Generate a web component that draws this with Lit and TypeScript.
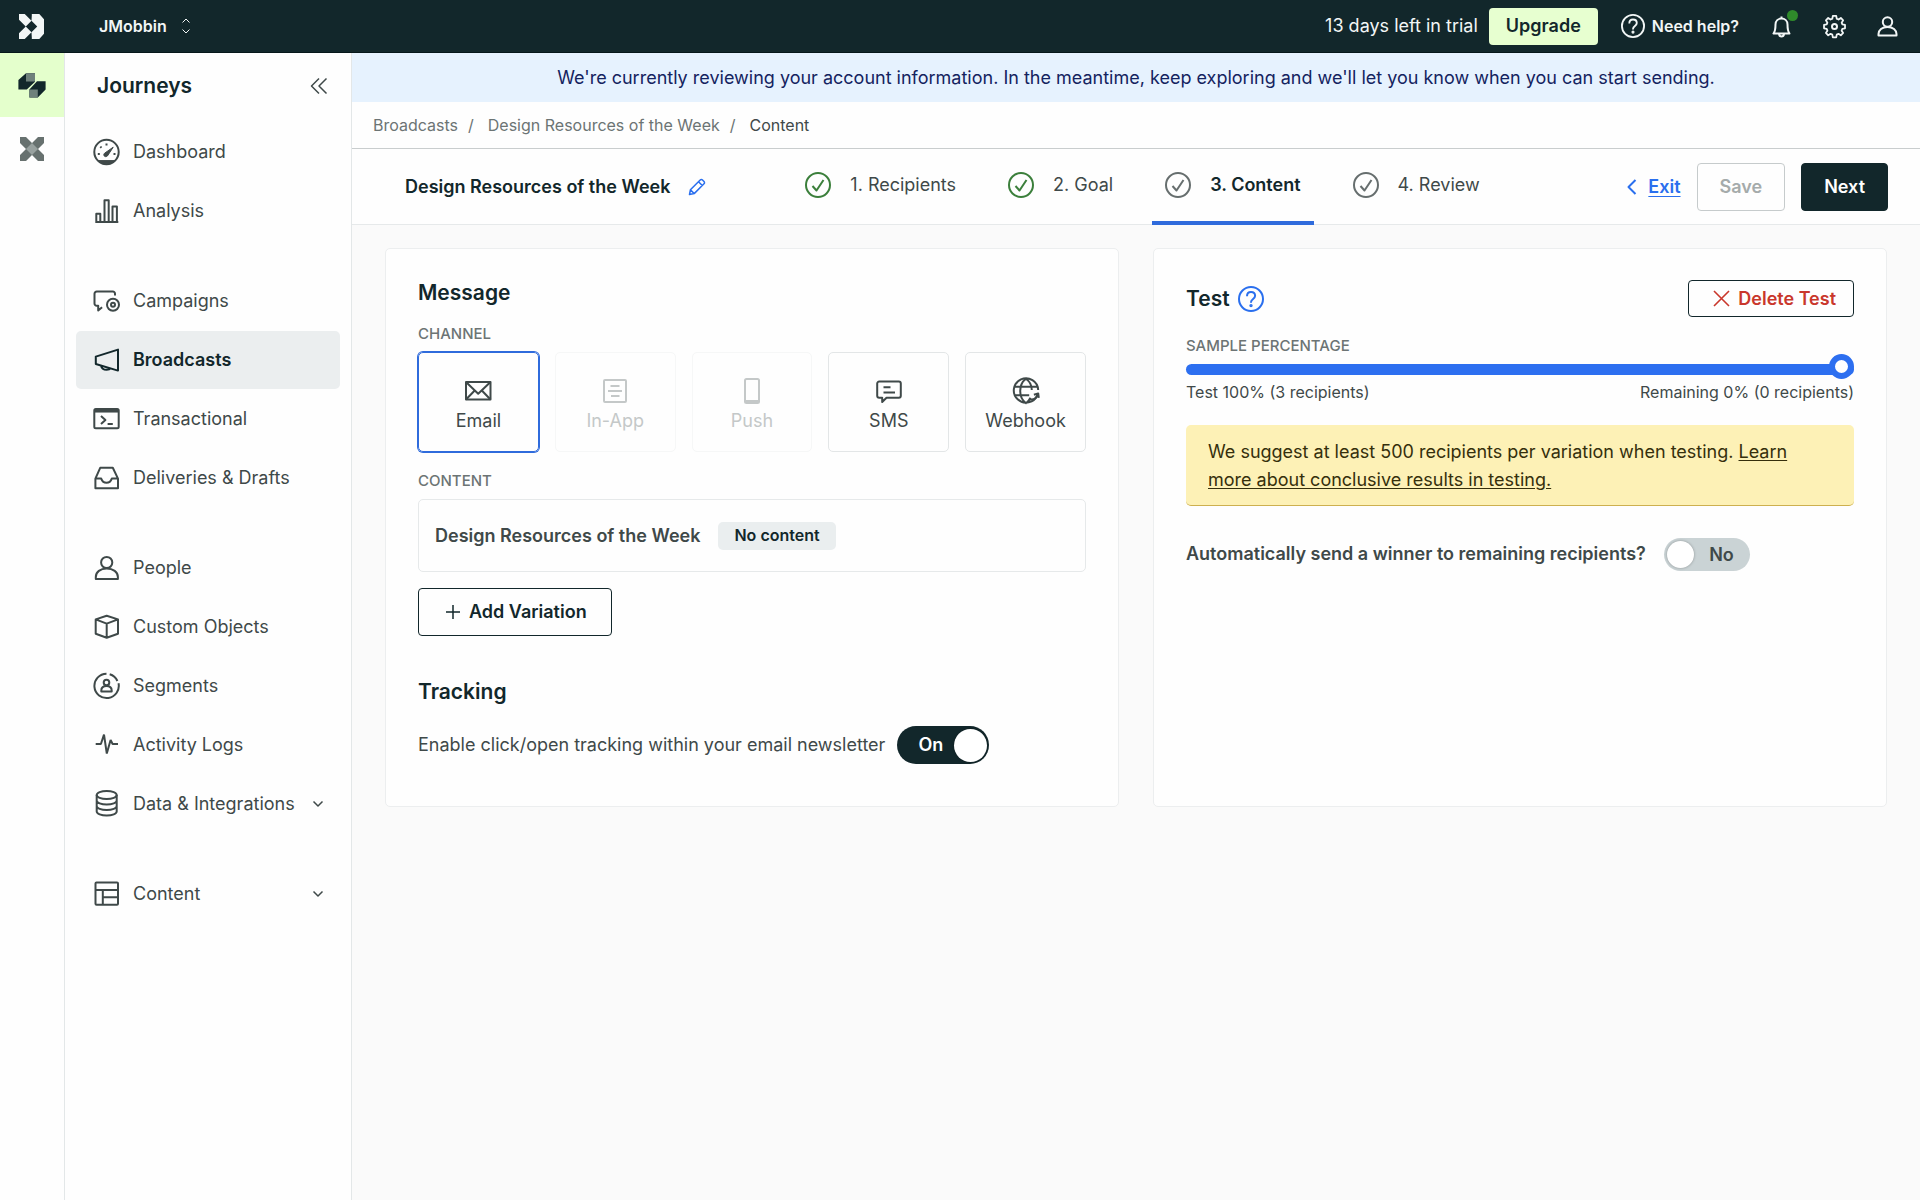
import { LitElement, html, svg, css, nothing, type TemplateResult } from "lit";
import { customElement, property, state } from "lit/decorators.js";
import { classMap } from "lit/directives/class-map.js";

/* Line icons for the navigation and the channel tiles, drawn on a 28px grid. */
const ICONS: Record<string, TemplateResult> = {
  dashboard: svg`<circle cx="14.5" cy="14" r="12.2"/><path d="M6 22.6h17l-4 3.2h-9z" fill="currentColor" stroke-width="1"/><path d="M14.5 5.500v2M8.300 8.600l1.200 1.200M5.800 16h2M21.500 16h2"/><path d="M12.600 15.200l8.600-6-5.800 8.800c-2.600 2-4.800-1-2.800-2.800z" fill="currentColor" stroke-width="1"/>`,
  analysis: svg`<path d="M3.300 25h23M4.300 25v-8.200h4V25M12.500 25V3.300h4.200V25M20.500 25V9.600h4.400V25"/>`,
  campaigns: svg`<path d="M23 8.400V6.800a2.200 2.200 0 0 0-2.200-2.200H4.700a2.200 2.200 0 0 0-2.200 2.200v9.800a2.200 2.200 0 0 0 2.200 2.200h1.500v4.600l3.900-3.200"/><circle cx="21" cy="17.700" r="6"/><circle cx="21" cy="17.700" r="2"/>`,
  broadcasts: svg`<path d="M3.800 10.600L26 3.600v21L3.800 18zM9 19.600c.6 3 3 4.200 5.600 4.200 2 0 3.400-.6 4-1.600"/>`,
  transactional: svg`<rect x="2.300" y="3.900" width="24.400" height="19.300" rx="1.500"/><path d="M2.300 5.800h24.400" stroke-width="3.500"/><path d="M9 11l4.400 4L9 19M15.600 19h5.200"/>`,
  deliveries: svg`<path d="M8.200 3.800h12.600L26 14.600v9.700H3.400v-9.700zM3.400 14.600h5.800c1 2.800 2.800 4.200 5.300 4.200s4.300-1.400 5.300-4.200H26"/>`,
  people: svg`<circle cx="14.700" cy="8.500" r="5.600"/><path d="M3.800 25v-2c0-5 4.500-8.500 10.900-8.500S25.900 18 25.900 23v2z"/>`,
  objects: svg`<path d="M14.700 2.800L26 6.400v14.300l-11.300 4L3.700 20.700V6.400zM3.700 6.400l11 4.200L26 6.400M14.700 10.600v14.100"/>`,
  segments: svg`<path d="M14.500 1.700a12.200 12.200 0 1 0 12 9.500M25.400 9a12 12 0 0 0-7.700-6.800"/><circle cx="14.500" cy="10.500" r="2.800"/><path d="M9.300 19.500v-1c0-2.800 2-4.500 5.200-4.500s5.200 1.700 5.200 4.500v1z"/>`,
  activity: svg`<path d="M3.700 13h5.200L12 3.600l2.800 19L18.600 9l2 4H26" stroke-linejoin="bevel"/>`,
  data: svg`<ellipse cx="14.700" cy="5" rx="10" ry="4"/><path d="M4.700 5v16.500c0 2.200 4.500 4 10 4s10-1.800 10-4V5M4.700 10.500c0 2.200 4.500 4 10 4s10-1.800 10-4M4.700 16c0 2.200 4.500 4 10 4s10-1.800 10-4"/>`,
  content: svg`<rect x="3.500" y="2.500" width="22.500" height="22.200" rx="1"/><path d="M3.500 10H26M10.800 10v14.700M10.800 17.200H26"/>`,
  email: svg`<rect x="2" y="5" width="24.500" height="17.500"/><path d="M2 5l12.200 11.700L26.500 5M2 22.500l8.700-9M26.500 22.500l-8.700-9"/>`,
  inapp: svg`<rect x="3" y="3" width="22" height="22" rx="1"/><path d="M9.500 9h9M7 14h14M10 19h8.500" stroke-width="2"/>`,
  push: svg`<rect x="7" y="2" width="14" height="24" rx="1.500"/><path d="M7 24.500h14" stroke-width="3"/>`,
  sms: svg`<path d="M4.200 4.500h19.600a2 2 0 0 1 2 2v12.200a2 2 0 0 1-2 2H11.500L7.200 25v-4.300h-3a2 2 0 0 1-2-2V6.500a2 2 0 0 1 2-2zM8.500 10.200h7M8.500 15.400h11.500"/>`,
  webhook: svg`<path d="M25.400 17.800A12.200 12.200 0 1 1 26.200 13M14 1.800C10.300 4.500 8.200 9 8.200 14s2.100 9.500 5.800 12.200c2-1.400 3.500-3.300 4.500-5.400M14 1.800c3.700 2.700 5.800 7 5.800 11.200M2.600 9.800h22.800M2.600 18.200h14.600"/><path d="M18 22.500c3.500.5 6.500-1 8-4.800M26.800 20.800l-.6-4.400-4.300 1.400"/>`,
};

const glyph = (name: string) =>
  html`<svg class="glyph" viewBox="0 0 28 28" aria-hidden="true">${ICONS[name]}</svg>`;

const helpGlyph = html`<svg class="help-glyph" viewBox="0 0 26 26" aria-hidden="true">
  <circle cx="13" cy="13" r="12" />
  <path d="M9 10.200C9 7.600 10.700 6 13 6s4.100 1.500 4.100 3.800c0 3.200-4.100 3.200-4.100 6.500v.4" />
  <circle cx="13" cy="19.600" r=".7" fill="currentColor" />
</svg>`;

interface NavItem {
  icon: string;
  label: string;
  expandable?: boolean;
}

const NAV: NavItem[][] = [
  [
    { icon: "dashboard", label: "Dashboard" },
    { icon: "analysis", label: "Analysis" },
  ],
  [
    { icon: "campaigns", label: "Campaigns" },
    { icon: "broadcasts", label: "Broadcasts" },
    { icon: "transactional", label: "Transactional" },
    { icon: "deliveries", label: "Deliveries & Drafts" },
  ],
  [
    { icon: "people", label: "People" },
    { icon: "objects", label: "Custom Objects" },
    { icon: "segments", label: "Segments" },
    { icon: "activity", label: "Activity Logs" },
    { icon: "data", label: "Data & Integrations", expandable: true },
  ],
  [{ icon: "content", label: "Content", expandable: true }],
];

const STEPS = [
  { label: "1. Recipients", done: true },
  { label: "2. Goal", done: true },
  { label: "3. Content", done: false },
  { label: "4. Review", done: false },
];

const CHANNELS = [
  { icon: "email", label: "Email" },
  { icon: "inapp", label: "In-App", disabled: true },
  { icon: "push", label: "Push", disabled: true },
  { icon: "sms", label: "SMS" },
  { icon: "webhook", label: "Webhook" },
];

const shared = css`
  *,
  *::before,
  *::after {
    box-sizing: border-box;
  }
  :host {
    display: block;
    font-family: Inter, "Liberation Sans", sans-serif;
    font-size: 18px;
    line-height: 28px;
    color: #3f4949;
  }
  h1,
  h2,
  h3,
  p,
  ul,
  ol {
    margin: 0;
    padding: 0;
    list-style: none;
  }
  button {
    font: inherit;
    color: inherit;
    background: none;
    border: 0;
    padding: 0;
    cursor: pointer;
  }
  a {
    color: inherit;
    text-decoration: none;
  }
  svg {
    display: block;
    flex: none;
    fill: none;
    stroke: currentColor;
    stroke-width: 2;
    stroke-linecap: butt;
    stroke-linejoin: round;
  }
  .strong {
    font-size: 18px;
    font-weight: 600;
  }
  .glyph {
    width: 28px;
    height: 28px;
  }
  .help-glyph {
    width: 26px;
    height: 26px;
  }
`;

@customElement("top-bar")
class TopBar extends LitElement {
  static styles = [
    shared,
    css`
      .bar {
        display: flex;
        align-items: center;
        justify-content: space-between;
        height: 53px;
        padding: 0 20px 0 19px;
        background: #12272b;
        color: #f2f6f6;
        border-bottom: 1px solid #06171a;
      }
      .side {
        display: flex;
        align-items: center;
      }
      .logo {
        width: 25px;
        height: 25px;
        fill: #f2f6f6;
        stroke: none;
      }
      .workspace {
        display: flex;
        align-items: center;
        gap: 14px;
        margin-left: 55px;
        font-size: 16px;
        font-weight: 600;
      }
      .sort {
        width: 10px;
        height: 16px;
        stroke-width: 1;
      }
      .upgrade {
        height: 37px;
        margin-left: 11px;
        padding: 0 17px;
        border-radius: 4px;
        background: #e7ffd0;
        color: #12272b;
      }
      .help {
        display: flex;
        align-items: center;
        gap: 7px;
        margin-left: 23px;
        font-size: 16px;
        font-weight: 600;
      }
      .help .help-glyph {
        width: 24px;
        height: 24px;
      }
      .tools {
        display: flex;
        gap: 28px;
        margin-left: 30px;
      }
      .tool {
        position: relative;
        display: block;
      }
      .tool svg {
        width: 25px;
        height: 25px;
      }
      .dot {
        position: absolute;
        top: -4px;
        right: -4px;
        width: 11px;
        height: 11px;
        border-radius: 50%;
        background: #2f8a2b;
      }
    `,
  ];

  render() {
    return html`<header class="bar">
      <div class="side">
        <svg class="logo" viewBox="0 0 24 24" aria-hidden="true">
          <path d="M0 0h5.500L12 6.500 6.500 12 0 5.500zM0 24h5.500L12 17.500 6.500 12 0 18.500zM12.300 0h7.200L24 5v14l-4.500 5h-7.200v-1.200L12 17.500l5.500-5.500L12 6.500l.3-5.200z" />
        </svg>
        <button class="workspace">
          JMobbin
          <svg class="sort" viewBox="0 0 10 16" aria-hidden="true"><path d="M1.500 4.500L5 1l3.500 3.500M1.500 11.500L5 15l3.500-3.500" /></svg>
        </button>
      </div>
      <div class="side">
        <span>13 days left in trial</span>
        <button class="upgrade strong">Upgrade</button>
        <button class="help">${helpGlyph}Need help?</button>
        <div class="tools">
          <button class="tool" aria-label="Notifications">
            <svg viewBox="0 0 25 25" aria-hidden="true"><path d="M4.500 19.500h16c-1.600-2-2-4-2-9 0-3.500-2.600-6-6-6s-6 2.500-6 6c0 5-.4 7-2 9zM10 20c.2 1.500 1.200 2.400 2.500 2.400S14.800 21.500 15 20M12.500 4.500v-2" /></svg>
            <span class="dot"></span>
          </button>
          <button class="tool" aria-label="Settings">
            <svg viewBox="0 0 25 25" aria-hidden="true"><path d="M10.600 2h3.800l.6 3.100 2 .9 2.600-1.800 2.600 2.700-1.700 2.600.8 2 3 .6v3.800l-3 .6-.8 2 1.700 2.600-2.600 2.700-2.600-1.800-2 .9-.6 3.100h-3.800L10 22.900 8 22l-2.600 1.800-2.600-2.700 1.700-2.600-.8-2-3-.6v-3.800l3-.6.8-2-1.700-2.600L5.400 4.200 8 6l2-.9z" transform="translate(1.400 .2) scale(.89)" /><circle cx="12.500" cy="12.500" r="2.500" /></svg>
          </button>
          <button class="tool" aria-label="Account">
            <svg viewBox="0 0 25 25" aria-hidden="true"><circle cx="12.500" cy="8" r="4.700" /><path d="M3.500 21.500v-1.500c0-4 3.600-7 9-7s9 3 9 7v1.500z" /></svg>
          </button>
        </div>
      </div>
    </header>`;
  }
}

@customElement("side-nav")
class SideNav extends LitElement {
  static styles = [
    shared,
    css`
      :host {
        display: flex;
        background: #fefefe;
      }
      .rail {
        display: flex;
        flex-direction: column;
        width: 65px;
        border-right: 1px solid #e3e7e8;
      }
      .product {
        display: grid;
        place-items: center;
        height: 64px;
      }
      .product.active {
        background: #e4ffcc;
      }
      .product svg {
        stroke: none;
      }
      .journeys {
        width: 28px;
        height: 25px;
      }
      .pipelines {
        width: 24px;
        height: 24px;
      }
      .menu {
        width: 287px;
        padding: 0 11px;
        border-right: 1px solid #e3e7e8;
      }
      .heading {
        display: flex;
        align-items: center;
        justify-content: space-between;
        height: 66px;
        padding: 0 12px 0 21px;
      }
      .heading h1 {
        font-size: 21px;
        font-weight: 600;
        color: #12272b;
      }
      .collapse svg {
        width: 18px;
        height: 18px;
      }
      nav {
        display: flex;
        flex-direction: column;
        gap: 32px;
        margin-top: 4px;
      }
      .group {
        display: flex;
        flex-direction: column;
        gap: 1px;
      }
      .item {
        display: flex;
        align-items: center;
        gap: 13px;
        height: 58px;
        padding: 0 14px 0 16px;
        border-radius: 5px;
        white-space: nowrap;
      }
      .item.active {
        background: #ebeeef;
        color: #12272b;
        font-weight: 600;
      }
      .chevron {
        width: 16px;
        height: 16px;
        margin-left: auto;
      }
    `,
  ];

  @property() current = "Broadcasts";

  render() {
    return html`
      <div class="rail">
        <a class="product active" href="#journeys" aria-label="Journeys">
          <svg class="journeys" viewBox="0 0 28 25" aria-hidden="true">
            <path fill="#12272b" d="M.4 7L8 .2h9v8.500L8.800 16.400H.4zM11.400 16.400L19 8.200h8.600v8.300L19.800 24.400h-8.400z" />
            <path fill="#6f817c" d="M8 .2h9v8.300H8zM11.400 16.400h8.400v8h-8.400z" />
          </svg>
        </a>
        <a class="product" href="#pipelines" aria-label="Data Pipelines">
          <svg class="pipelines" viewBox="0 0 24 24" aria-hidden="true">
            <path fill="#67716f" d="M0 0h6l6 6 6-6h6v6l-6 6 6 6v6h-6l-6-6-6 6H0v-6l6-6-6-6z" />
            <path fill="#98a19f" d="M12 6l6 6-6 6-6-6z" />
          </svg>
        </a>
      </div>
      <div class="menu">
        <div class="heading">
          <h1>Journeys</h1>
          <button class="collapse" aria-label="Collapse navigation">
            <svg viewBox="0 0 18 18" aria-hidden="true"><path d="M9 1.500L1.500 9 9 16.500M16.500 1.500L9 9l7.500 7.500" stroke-width="1.500" /></svg>
          </button>
        </div>
        <nav aria-label="Main">
          ${NAV.map(
            (group) => html`<ul class="group">
              ${group.map(
                (item) => html`<li>
                  <a class=${classMap({ item: true, active: item.label === this.current })} href="#" aria-current=${item.label === this.current ? "page" : nothing}>
                    ${glyph(item.icon)}<span>${item.label}</span>
                    ${item.expandable
                      ? html`<svg class="chevron" viewBox="0 0 16 16" aria-hidden="true"><path d="M3.500 5.500L8 10l4.500-4.500" stroke-width="1.500" /></svg>`
                      : nothing}
                  </a>
                </li>`
              )}
            </ul>`
          )}
        </nav>
      </div>
    `;
  }
}

@customElement("broadcast-header")
class BroadcastHeader extends LitElement {
  static styles = [
    shared,
    css`
      .notice {
        padding: 11px 16px 10px;
        background: #e6f2fe;
        color: #14235f;
        text-align: center;
      }
      .crumbs {
        display: flex;
        align-items: center;
        height: 47px;
        padding-left: 21px;
        background: #fefefe;
        border-bottom: 1px solid #c9cdce;
        font-size: 16px;
        color: #6c7474;
      }
      .crumbs li + li::before {
        content: "/";
        padding: 0 14px 0 10px;
      }
      .crumbs .here {
        color: #3f4949;
      }
      .bar {
        display: grid;
        grid-template-columns: 1fr auto 1fr;
        height: 76px;
        padding: 0 32px 0 45px;
        background: #fefefe;
        border-bottom: 1px solid #e6e9ea;
      }
      .title {
        display: flex;
        align-items: center;
        gap: 18px;
        padding-left: 8px;
        color: #12272b;
      }
      .edit {
        color: #2a6fee;
      }
      .edit svg {
        width: 18px;
        height: 18px;
      }
      .steps {
        display: flex;
        gap: 26px;
        margin-bottom: -1px;
      }
      .step {
        display: flex;
        align-items: center;
        gap: 19px;
        height: 76px;
        padding: 0 13px;
        border-bottom: 4px solid transparent;
        white-space: nowrap;
      }
      .step svg {
        width: 26px;
        height: 26px;
        color: #666e6e;
      }
      .step.done svg {
        color: #3b7f3b;
      }
      .step.current {
        border-bottom-color: #2f6bdc;
        color: #12272b;
        font-weight: 600;
      }
      .actions {
        display: flex;
        align-items: center;
        justify-content: flex-end;
        gap: 16px;
      }
      .exit {
        display: flex;
        align-items: center;
        gap: 11px;
        color: #2a6fee;
      }
      .exit span {
        text-decoration: underline;
        text-underline-offset: 3px;
      }
      .exit svg {
        width: 11px;
        height: 18px;
      }
      .button {
        height: 48px;
        padding: 0 22px;
        border: 1px solid #12272b;
        border-radius: 4px;
        background: #12272b;
        color: #fff;
      }
      .button:disabled {
        border-color: #c6cbcc;
        background: #fefefe;
        color: #a5abab;
        cursor: default;
      }
    `,
  ];

  @property() name = "";

  render() {
    return html`
      <p class="notice">We're currently reviewing your account information. In the meantime, keep exploring and we'll let you know when you can start sending.</p>
      <nav aria-label="Breadcrumb">
        <ol class="crumbs">
          <li><a href="#broadcasts">Broadcasts</a></li>
          <li><a href="#broadcast">${this.name}</a></li>
          <li><span class="here" aria-current="page">Content</span></li>
        </ol>
      </nav>
      <div class="bar">
        <div class="title">
          <h2 class="strong">${this.name}</h2>
          <button class="edit" aria-label="Rename broadcast">
            <svg viewBox="0 0 18 18" aria-hidden="true"><path d="M1.500 16.500l.9-4.700L12.200 2a1.600 1.600 0 0 1 2.300 0l1.500 1.500a1.600 1.600 0 0 1 0 2.300L6.200 15.600zM10.500 3.700l3.800 3.800M2.400 11.800l3.800 3.800" stroke-width="1.500" /></svg>
          </button>
        </div>
        <nav class="steps" aria-label="Steps">
          ${STEPS.map(
            (step, i) => html`<a class=${classMap({ step: true, done: step.done, current: i === 2 })} href="#" aria-current=${i === 2 ? "step" : nothing}>
              <svg viewBox="0 0 26 26" aria-hidden="true"><circle cx="13" cy="13" r="12" /><path d="M7.500 14l4 4.500 7-10.500" /></svg>
              <span>${step.label}</span>
            </a>`
          )}
        </nav>
        <div class="actions">
          <a class="exit strong" href="#exit">
            <svg viewBox="0 0 11 18" aria-hidden="true"><path d="M9.500 2L2.500 9l7 7" /></svg>
            <span>Exit</span>
          </a>
          <button class="button strong" disabled>Save</button>
          <button class="button strong">Next</button>
        </div>
      </div>
    `;
  }
}

const card = css`
  :host {
    padding: 30px 32px 32px;
    background: #fefefe;
    border: 1px solid #eceeef;
    border-radius: 5px;
  }
  .card-title {
    font-size: 21px;
    font-weight: 600;
    color: #12272b;
  }
  .label {
    font-size: 15px;
    font-weight: 500;
    line-height: 20px;
    color: #6c7474;
    text-transform: uppercase;
  }
  .outline {
    display: flex;
    align-items: center;
    border: 1px solid #12272b;
    border-radius: 4px;
    background: #fefefe;
    color: #12272b;
  }
  .toggle {
    display: grid;
    align-items: center;
    cursor: pointer;
  }
  .toggle > * {
    grid-area: 1 / 1;
  }
  .toggle input {
    appearance: none;
    display: flex;
    align-items: center;
    width: 100%;
    height: 100%;
    margin: 0;
    border-radius: 20px;
    background: #cad3d5;
    cursor: pointer;
  }
  .toggle input::before {
    content: "";
    border-radius: 50%;
    background: #fff;
    box-shadow: 0 0 3px rgba(0, 0, 0, 0.3);
  }
  .toggle input:checked {
    justify-content: flex-end;
    background: #12272b;
  }
  .toggle span {
    z-index: 1;
    pointer-events: none;
  }
`;

@customElement("message-card")
class MessageCard extends LitElement {
  static styles = [
    shared,
    card,
    css`
      .channel-label {
        margin-top: 17px;
      }
      .channels {
        display: grid;
        grid-template-columns: repeat(5, 1fr);
        gap: 16px;
        margin-top: 8px;
      }
      .channel {
        display: flex;
        flex-direction: column;
        align-items: center;
        justify-content: center;
        gap: 2px;
        height: 100px;
        padding-top: 8px;
        border: 1px solid #e3e6e7;
        border-radius: 5px;
      }
      .channel:disabled {
        border-color: #f6f7f7;
        color: #c4c8c8;
        cursor: default;
      }
      .channel.selected {
        border-color: #2f6bdc;
        box-shadow: 0 0 0 1px #2f6bdc;
      }
      .content-label {
        margin-top: 19px;
      }
      .variation {
        display: flex;
        align-items: center;
        gap: 18px;
        height: 73px;
        margin: 8px 0 16px;
        padding: 0 16px;
        border: 1px solid #e6e9ea;
        border-radius: 5px;
      }
      .badge {
        padding: 0 16px 2px;
        border-radius: 5px;
        background: #eaeeef;
        color: #12272b;
        font-size: 16px;
        font-weight: 600;
        line-height: 26px;
      }
      .add {
        gap: 8px;
        height: 48px;
        padding: 0 24px 0 26px;
      }
      .add svg {
        width: 16px;
        height: 16px;
      }
      .tracking-title {
        margin-top: 42px;
      }
      .tracking {
        display: flex;
        align-items: center;
        gap: 12px;
        margin: 20px 0 10px;
      }
      .on {
        width: 92px;
        height: 38px;
      }
      .on input {
        padding: 2px;
      }
      .on input::before {
        width: 33px;
        height: 33px;
      }
      .on span {
        padding-left: 21px;
        color: #fff;
      }
    `,
  ];

  @property() name = "";
  @state() private channel = "Email";
  @state() private tracking = true;

  render() {
    return html`
      <h2 class="card-title">Message</h2>
      <h3 class="label channel-label" id="channel-label">Channel</h3>
      <div class="channels" role="group" aria-labelledby="channel-label">
        ${CHANNELS.map(
          (c) => html`<button
            class=${classMap({ channel: true, selected: c.label === this.channel })}
            aria-pressed=${c.label === this.channel ? "true" : "false"}
            ?disabled=${c.disabled}
            @click=${() => (this.channel = c.label)}
          >
            ${glyph(c.icon)}<span>${c.label}</span>
          </button>`
        )}
      </div>
      <h3 class="label content-label">Content</h3>
      <div class="variation">
        <h3 class="strong">${this.name}</h3>
        <span class="badge">No content</span>
      </div>
      <button class="outline strong add">
        <svg viewBox="0 0 16 16" aria-hidden="true"><path d="M8 1v14M1 8h14" stroke-width="1.500" /></svg>
        Add Variation
      </button>
      <h2 class="card-title tracking-title">Tracking</h2>
      <div class="tracking">
        <span id="tracking-label">Enable click/open tracking within your email newsletter</span>
        <label class="toggle on">
          <input
            type="checkbox"
            aria-labelledby="tracking-label"
            .checked=${this.tracking}
            @change=${(e: Event) => (this.tracking = (e.target as HTMLInputElement).checked)}
          />
          <span class="strong">${this.tracking ? "On" : "Off"}</span>
        </label>
      </div>
    `;
  }
}

@customElement("test-card")
class TestCard extends LitElement {
  static styles = [
    shared,
    card,
    css`
      .head {
        display: flex;
        align-items: center;
        justify-content: space-between;
        margin-top: 1px;
      }
      .name {
        display: flex;
        align-items: center;
        gap: 8px;
      }
      .info {
        color: #2a6fee;
      }
      .delete {
        gap: 8px;
        height: 37px;
        padding: 0 17px 0 24px;
        color: #c9372c;
      }
      .delete svg {
        width: 17px;
        height: 17px;
      }
      .sample {
        display: block;
        margin-top: 19px;
      }
      .slider {
        appearance: none;
        display: block;
        width: 100%;
        height: 25px;
        margin: 1px 0 0;
        background: none;
      }
      .slider::-webkit-slider-runnable-track {
        height: 11px;
        border-radius: 6px;
        background: #2d6ff0;
      }
      .slider::-webkit-slider-thumb {
        appearance: none;
        width: 25px;
        height: 25px;
        margin-top: -10px;
        border: 6px solid #2d6ff0;
        border-radius: 50%;
        background: #fff;
      }
      .split {
        display: flex;
        justify-content: space-between;
        font-size: 16px;
        line-height: 20px;
      }
      .tip {
        margin-top: 23px;
        padding: 13px 22px 11px;
        border-bottom: 1px solid #cdb04f;
        border-radius: 5px;
        background: #fdf1b6;
        color: #352f0c;
      }
      .tip a {
        text-decoration: underline;
        text-underline-offset: 2px;
      }
      .winner {
        display: flex;
        align-items: center;
        gap: 18px;
        margin-top: 32px;
      }
      .no {
        width: 86px;
        height: 32px;
      }
      .no input {
        padding: 3px;
      }
      .no input::before {
        width: 27px;
        height: 27px;
      }
      .no span {
        padding-right: 16px;
        text-align: right;
      }
    `,
  ];

  @state() private winner = false;

  render() {
    return html`
      <div class="head">
        <div class="name">
          <h2 class="card-title">Test</h2>
          <button class="info" aria-label="About tests">${helpGlyph}</button>
        </div>
        <button class="outline strong delete">
          <svg viewBox="0 0 17 17" aria-hidden="true"><path d="M1 1l15 15M16 1L1 16" stroke-width="1.600" /></svg>
          Delete Test
        </button>
      </div>
      <label class="label sample" for="sample">Sample percentage</label>
      <input class="slider" id="sample" type="range" min="0" max="100" value="100" />
      <div class="split">
        <span>Test 100% (3 recipients)</span>
        <span>Remaining 0% (0 recipients)</span>
      </div>
      <p class="tip">
        We suggest at least 500 recipients per variation when testing.
        <a href="#testing">Learn more about conclusive results in testing.</a>
      </p>
      <div class="winner">
        <span class="strong" id="winner-label">Automatically send a winner to remaining recipients?</span>
        <label class="toggle no">
          <input
            type="checkbox"
            aria-labelledby="winner-label"
            .checked=${this.winner}
            @change=${(e: Event) => (this.winner = (e.target as HTMLInputElement).checked)}
          />
          <span class="strong">${this.winner ? "Yes" : "No"}</span>
        </label>
      </div>
    `;
  }
}

@customElement("app-root")
class AppRoot extends LitElement {
  static styles = [
    shared,
    css`
      :host {
        display: flex;
        flex-direction: column;
        min-height: 100vh;
        background: #fafafa;
      }
      .body {
        display: flex;
        flex: 1;
      }
      main {
        flex: 1;
        min-width: 0;
      }
      .cards {
        display: grid;
        grid-template-columns: 1fr 1fr;
        gap: 34px;
        padding: 23px 33px;
      }
    `,
  ];

  private readonly broadcast = "Design Resources of the Week";

  render() {
    return html`
      <top-bar></top-bar>
      <div class="body">
        <side-nav></side-nav>
        <main>
          <broadcast-header .name=${this.broadcast}></broadcast-header>
          <div class="cards">
            <message-card .name=${this.broadcast}></message-card>
            <test-card></test-card>
          </div>
        </main>
      </div>
    `;
  }
}
